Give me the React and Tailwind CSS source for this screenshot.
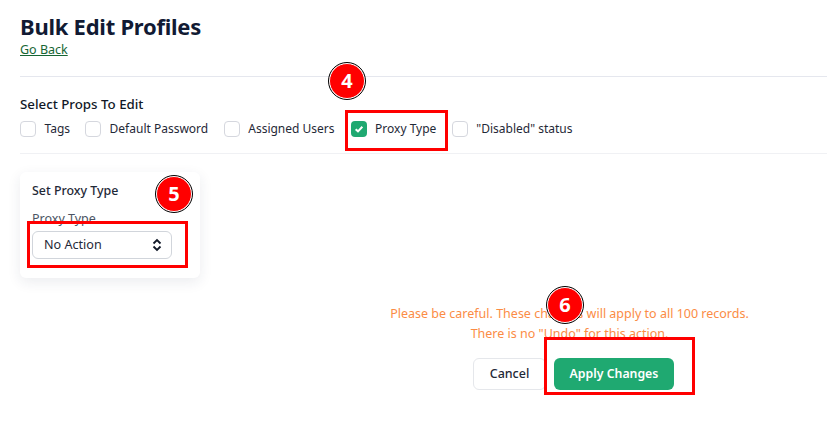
import React from 'react';

const PROPS = [
  { label: 'Tags', gap: 'mr-[15px]' },
  { label: 'Default Password', gap: 'mr-[15.5px]' },
  { label: 'Assigned Users', gap: 'mr-[16px]' },
  { label: 'Proxy Type', gap: 'mr-[15.5px]', checked: true },
  { label: '"Disabled" status', gap: '' }
];

const PropCheckbox = ({ label, checked, gap }) => (
  <label className={`flex items-center gap-[8.5px] ${gap}`}>
    {checked ? (
      <span className="flex items-center justify-center w-[16px] h-[16px] rounded-[4px] bg-[#1fa971]">
        <svg className="w-[10px] h-[10px]" viewBox="0 0 12 12" fill="none" stroke="white" strokeWidth="2.4">
          <path d="M2 6.2l2.8 2.6L10 3.3" />
        </svg>
      </span>
    ) : (
      <span className="w-[16px] h-[16px] rounded-[4px] border border-[#d5d7de] bg-white" />
    )}
    <span className="text-[12px] leading-[16px] text-[#1f2937]">{label}</span>
  </label>
);

const Badge = ({ n, className }) => (
  <div className={`absolute w-[36px] h-[36px] rounded-full bg-[#ff0000] border border-white outline outline-1 outline-black flex items-center justify-center text-white text-[20px] font-bold ${className}`}>
    {n}
  </div>
);

const Highlight = ({ className }) => (
  <div className={`absolute border-[3px] border-[#ff0000] ${className}`} />
);

export default function App() {
  return (
    <div className="relative w-[827px] h-[438px] overflow-hidden bg-white pl-[20px] pt-[11px] font-['Noto_Sans',sans-serif]">
      <h1 className="text-[22px] leading-[30px] font-bold tracking-[-0.25px] text-[#111a33]">Bulk Edit Profiles</h1>
      <a className="block mt-[1px] text-[12.5px] leading-[16px] text-[#166534] underline w-fit">Go Back</a>

      <hr className="mt-[18px] border-[#e5e7ee]" />

      <p className="mt-[18px] text-[13.3px] leading-[18px] font-medium text-[#111827]">Select Props To Edit</p>
      <div className="flex items-center mt-[8px]">
        {PROPS.map((prop) => (
          <PropCheckbox key={prop.label} {...prop} />
        ))}
      </div>

      <hr className="mt-[16px] border-[#f0f1f4]" />

      <div className="mt-[18px] w-[180px] h-[106px] rounded-[6px] bg-white shadow-[0_4px_14px_rgba(30,41,80,0.09)] px-[12px] pt-[11px]">
        <p className="text-[12.4px] leading-[16px] font-medium text-[#1f2937]">Set Proxy Type</p>
        <p className="mt-[12px] text-[12.5px] leading-[16px] text-[#4b5563]">Proxy Type</p>
        <div className="mt-[4px] flex items-center justify-between w-[140px] h-[28px] rounded-[6px] border border-[#d1d5db] pl-[11px] pr-[8px]">
          <span className="text-[12.6px] text-[#1f2937]">No Action</span>
          <svg className="w-[12px] h-[14px]" viewBox="0 0 12 14" fill="none" stroke="#111827" strokeWidth="1.8">
            <path d="M2.5 5.5L6 2l3.5 3.5M2.5 8.5L6 12l3.5-3.5" />
          </svg>
        </div>
      </div>

      <div className="flex justify-end mt-[26px]">
        <div className="w-[515px]">
          <div className="text-center text-[12.5px] leading-[20px] text-[#fb8c45]">
            <p>Please be careful. These changes will apply to all 100 records.</p>
            <p>There is no "Undo" for this action.</p>
          </div>
          <div className="flex justify-center gap-[8px] mt-[14px] pl-[8px]">
            <button className="w-[73px] h-[32px] rounded-[6px] border border-[#e5e7eb] bg-white text-[12.5px] font-medium text-[#1f2937]">Cancel</button>
            <button className="w-[120px] h-[32px] rounded-[6px] bg-[#1fa971] text-[12.3px] font-semibold text-white">Apply Changes</button>
          </div>
        </div>
      </div>

      <Highlight className="left-[345px] top-[110px] w-[103px] h-[41px]" />
      <Highlight className="left-[27px] top-[221px] w-[161px] h-[47px]" />
      <Highlight className="left-[544px] top-[337px] w-[151px] h-[58px]" />

      <Badge n="4" className="left-[329px] top-[63px]" />
      <Badge n="5" className="left-[156px] top-[176px]" />
      <Badge n="6" className="left-[547px] top-[287px]" />
    </div>
  );
}
